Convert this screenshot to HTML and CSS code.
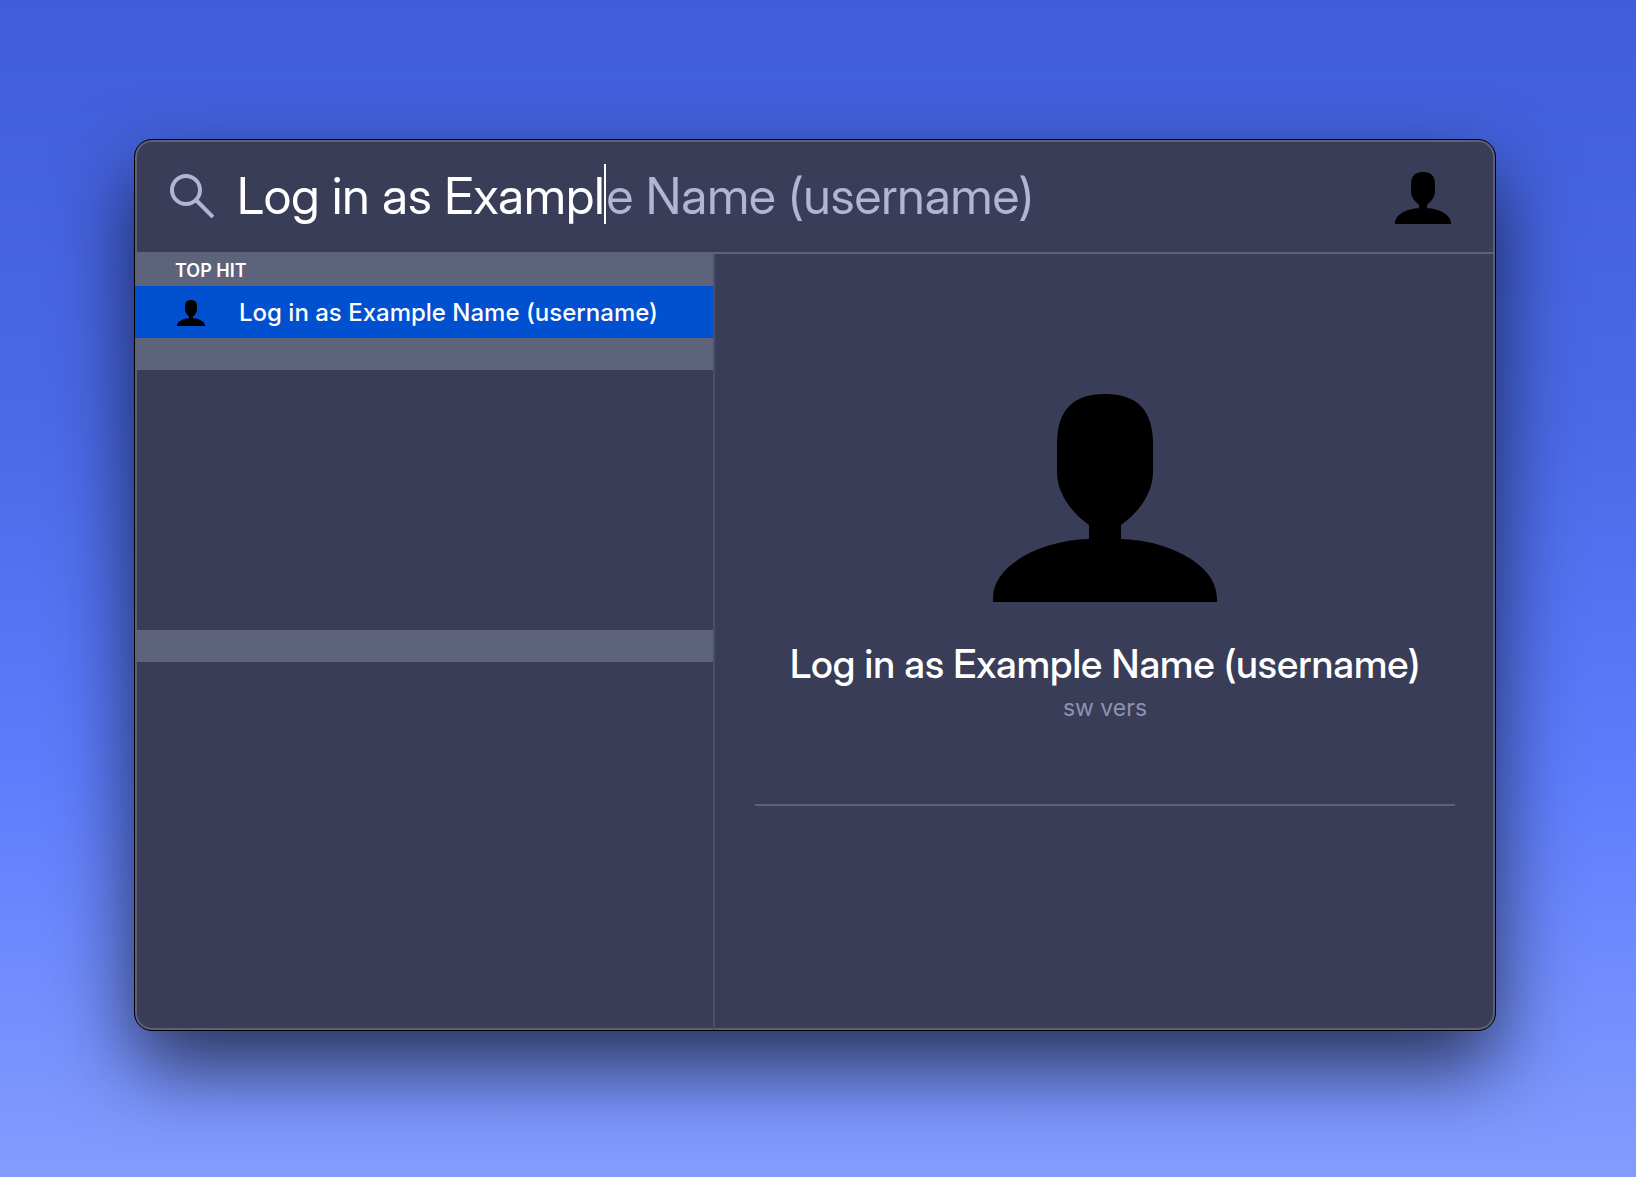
FILE: index.html
```html
<!DOCTYPE html>
<html lang="en">
<head>
<meta charset="utf-8">
<title>Launcher</title>
<link rel="stylesheet" href="styles.css">
</head>
<body>
<svg class="defs" aria-hidden="true">
  <symbol id="person" viewBox="0 0 224 208">
    <path d="M0 208V204C0 170 50 146 96 145V131C76 117 64 97 64 78V50C64 16 80 0 112 0S160 16 160 50V78C160 97 148 117 128 131V145C174 146 224 170 224 204V208Z"/>
  </symbol>
</svg>
<main class="launcher">
  <header class="search">
    <svg class="search-icon" viewBox="0 0 44 44" aria-hidden="true">
      <circle cx="16" cy="16" r="14"/>
      <path d="M26 26L43 43"/>
    </svg>
    <div class="query">
      <input class="query-input" type="text" value="Log in as Exampl" aria-label="Search" spellcheck="false">
      <span class="caret"></span>
      <span class="completion">e Name (username)</span>
    </div>
    <svg class="person person-medium" aria-hidden="true"><use href="#person"/></svg>
  </header>
  <div class="body">
    <section class="results">
      <h2 class="group">TOP HIT</h2>
      <button class="result" type="button">
        <svg class="person person-small" aria-hidden="true"><use href="#person"/></svg>
        <span>Log in as Example Name (username)</span>
      </button>
      <div class="group"></div>
      <div class="rows"></div>
      <div class="group"></div>
    </section>
    <section class="detail">
      <svg class="person person-large" aria-hidden="true"><use href="#person"/></svg>
      <h1 class="detail-title">Log in as Example Name (username)</h1>
      <p class="detail-subtitle">sw vers</p>
      <hr class="rule">
    </section>
  </div>
</main>
</body>
</html>
```
FILE: styles.css
```css
* {
  box-sizing: border-box;
}

body {
  margin: 0;
  min-height: 100vh;
  padding: 139px 140px 146px 134px;
  display: flex;
  background: linear-gradient(#405ed9, #4a69e6 35%, #5374f3 52%, #5d7dfc 66%, #849cff);
  color: #fff;
  font-family: Inter, "Liberation Sans", sans-serif;
}

.defs {
  position: absolute;
  width: 0;
  height: 0;
}

.launcher {
  flex: 1;
  min-width: 0;
  display: flex;
  flex-direction: column;
  overflow: hidden;
  border: 1px solid #000;
  border-radius: 18px;
  background: #393d58;
  box-shadow: inset 0 0 0 2px #5d6078, 0 36px 80px rgba(0, 0, 0, 0.65);
}

.search {
  height: 114px;
  padding: 0 44px 0 35px;
  display: flex;
  align-items: center;
  border-bottom: 2px solid #5c637b;
}

.search-icon {
  width: 44px;
  height: 44px;
  margin-right: 23px;
  fill: none;
  stroke: #b0b5d3;
  stroke-width: 4;
}

.query {
  flex: 1;
  min-width: 0;
  display: flex;
  align-items: center;
  white-space: nowrap;
  font-family: "Inter Display", Inter, "Liberation Sans", sans-serif;
  font-size: 50px;
  font-weight: 400;
  line-height: 64px;
}

.query-input {
  field-sizing: content;
  height: 64px;
  padding: 0;
  border: 0;
  outline: 0;
  background: none;
  color: inherit;
  font: inherit;
}

.caret {
  align-self: flex-start;
  width: 2px;
  height: 60px;
  background: #fff;
}

.completion {
  color: #b0b5d3;
}

.person {
  display: block;
  fill: #000;
}

.person-small {
  width: 28px;
  height: 26px;
}

.person-medium {
  width: 56px;
  height: 52px;
  margin-top: 4px;
}

.person-large {
  width: 224px;
  height: 208px;
}

.body {
  flex: 1;
  display: flex;
}

.results {
  width: 42.5%;
}

.group {
  height: 32px;
  margin: 0;
  padding-left: 40px;
  background: #5c637b;
  font-size: 18px;
  font-weight: 600;
  line-height: 34px;
}

.result {
  width: 100%;
  height: 52px;
  padding: 2px 42px 0;
  display: flex;
  align-items: center;
  gap: 34px;
  border: 0;
  background: #0050d0;
  color: inherit;
  font: 450 24px/32px Inter, "Liberation Sans", sans-serif;
  white-space: nowrap;
}

.rows {
  height: 260px;
}

.detail {
  flex: 1;
  min-width: 0;
  padding: 140px 40px 40px;
  display: flex;
  flex-direction: column;
  align-items: center;
  border-left: 2px solid #4b506a;
}

.detail-title {
  margin: 38px 0 0;
  font-family: "Inter Display", Inter, "Liberation Sans", sans-serif;
  font-size: 39px;
  font-weight: 500;
  line-height: 48px;
  white-space: nowrap;
}

.detail-subtitle {
  margin: 4px 0 0;
  color: #8c92b0;
  font-size: 23px;
  line-height: 32px;
}

.rule {
  width: 100%;
  height: 2px;
  margin: 80px 0 0;
  border: 0;
  background: #5c637b;
}
```
